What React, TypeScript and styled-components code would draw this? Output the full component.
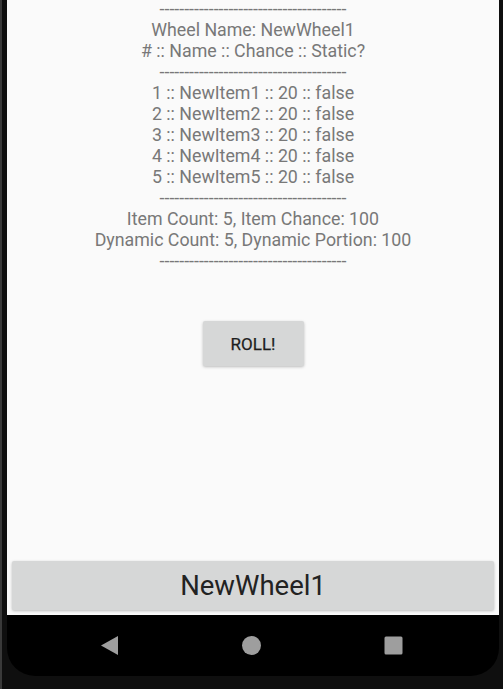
import React from "react";
import styled, { createGlobalStyle } from "styled-components";

const Global = createGlobalStyle`
  html, body { margin: 0; padding: 0; background: #101010; }
  #root { width: 503px; height: 689px; }
`;

const Frame = styled.div`
  width: 503px;
  height: 689px;
  box-sizing: border-box;
  background: #0f0f0f;
  border-left: 2px solid #3a3a3a;
  padding: 0 4px 13px 5px;
  display: flex;
  flex-direction: column;
`;

const Screen = styled.div`
  flex: 0 0 615px;
  background: #fafafa;
  display: flex;
  flex-direction: column;
  align-items: center;
  font-family: Roboto, "Noto Sans", sans-serif;
  overflow: hidden;
`;

const Info = styled.div`
  display: flex;
  flex-direction: column;
  align-items: center;
  color: #787878;
  font-size: 17.8px;
  line-height: 21px;
`;

const Line = styled.div<{ $top?: boolean }>`
  white-space: pre;
  ${(p) => (p.$top ? "line-height: 17px; padding-bottom: 2px;" : "")}
`;

const RollButton = styled.button`
  margin-top: 50px;
  width: 101px;
  height: 45px;
  border: none;
  border-radius: 2px;
  background: #d6d7d7;
  box-shadow: 0 1px 3px rgba(0, 0, 0, 0.25);
  font-family: Roboto, sans-serif;
  font-weight: 400;
  font-size: 17px;
  color: #1e1e1e;
  -webkit-text-stroke: 0.25px #1e1e1e;
  padding: 0;
`;

const Spacer = styled.div`
  flex: 1;
`;

const WheelButton = styled.button`
  align-self: stretch;
  margin: 0 5px 5px 5px;
  height: 49px;
  border: none;
  border-radius: 2px;
  background: #d6d7d7;
  box-shadow: 0 1px 3px rgba(0, 0, 0, 0.25);
  font-family: Roboto, sans-serif;
  font-size: 27.5px;
  color: #222;
  padding: 0;
`;

const NavBar = styled.div`
  flex: 0 0 61px;
  background: #000;
  border-radius: 0 0 28px 28px;
  display: flex;
  align-items: center;
  justify-content: space-between;
  padding: 0 96px 0 93px;
`;

const NavIcon = styled.svg`
  width: 19px;
  height: 19px;
  fill: #9e9e9e;
`;

const DASH = "--------------------------------------";

const items = [1, 2, 3, 4, 5].map((n) => `${n} :: NewItem${n} :: 20 :: false`);

export default function App() {
  return (
    <>
      <Global />
      <Frame>
        <Screen>
          <Info>
            <Line $top>{DASH}</Line>
            <Line>Wheel Name: NewWheel1</Line>
            <Line># :: Name :: Chance :: Static?</Line>
            <Line>{DASH}</Line>
            {items.map((t) => (
              <Line key={t}>{t}</Line>
            ))}
            <Line>{DASH}</Line>
            <Line>Item Count: 5, Item Chance: 100</Line>
            <Line>Dynamic Count: 5, Dynamic Portion: 100</Line>
            <Line>{DASH}</Line>
          </Info>
          <RollButton>ROLL!</RollButton>
          <Spacer />
          <WheelButton>NewWheel1</WheelButton>
        </Screen>
        <NavBar>
          <NavIcon viewBox="0 0 19 19">
            <path d="M18 0 L18 19 L1 9.5 Z" />
          </NavIcon>
          <NavIcon viewBox="0 0 19 19">
            <circle cx="9.5" cy="9.5" r="9.5" />
          </NavIcon>
          <NavIcon viewBox="0 0 19 19">
            <rect x="0.5" y="0.5" width="18" height="18" rx="1.5" />
          </NavIcon>
        </NavBar>
      </Frame>
    </>
  );
}
